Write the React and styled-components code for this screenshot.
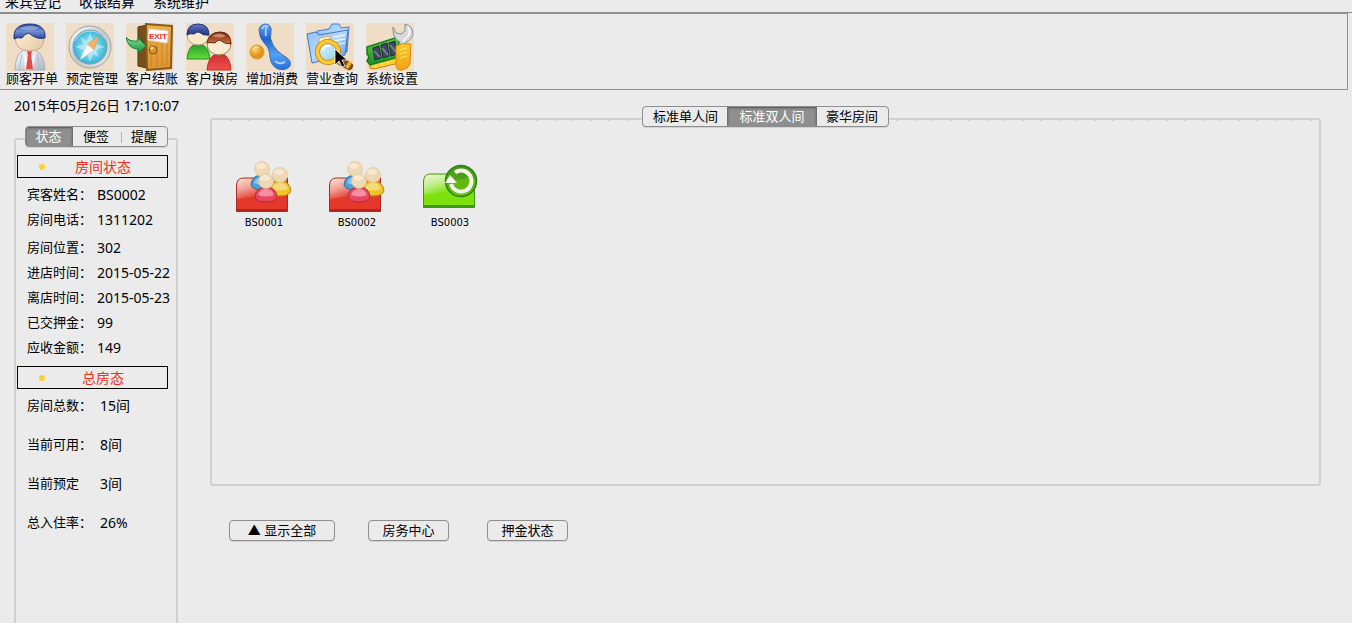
import React, { useState } from "react";
import styled, { createGlobalStyle } from "styled-components";

const GlobalStyle = createGlobalStyle`
  * { box-sizing: border-box; }
  body {
    margin: 0;
    background: #ebebeb;
    color: #000;
    font-family: "Noto Sans", "Noto Sans CJK SC", sans-serif;
    font-size: 13px;
  }
  button { font: inherit; color: inherit; cursor: default; }
`;

const Page = styled.div`
  min-height: 100vh;
  display: flex;
  flex-direction: column;
  overflow: hidden;
`;

const MenuBar = styled.nav`
  height: 12px;
  flex: none;
  display: flex;
  align-items: flex-end;
  gap: 18px;
  padding-left: 5px;
  overflow: hidden;
`;

const MenuItem = styled.button`
  border: 0;
  padding: 0;
  background: none;
  font-size: 14px;
  line-height: 20px;
`;

const ToolBarRow = styled.div`
  border-top: 1px solid #8e8e8e;
  padding-right: 4px;
`;

const ToolBar = styled.div`
  display: flex;
  gap: 8px;
  height: 77px;
  padding: 9px 6px 0;
  border: 1px solid #8e8e8e;
  border-left: 0;
`;

const ToolButton = styled.button`
  width: 52px;
  display: flex;
  flex-direction: column;
  align-items: flex-start;
  border: 0;
  padding: 0;
  background: none;
  line-height: 14px;
  white-space: nowrap;
  svg { display: block; background: #efdec5; }
`;

const Body = styled.div`
  flex: 1;
  display: flex;
  gap: 32px;
  padding: 6px 31px 0 14px;
`;

const SideBar = styled.aside`
  width: 164px;
  flex: none;
  display: flex;
  flex-direction: column;
`;

const Clock = styled.time`
  font-size: 14px;
  line-height: 20px;
  white-space: nowrap;
`;

const TabList = styled.div`
  position: relative;
  z-index: 1;
  align-self: center;
  display: flex;
  height: 21px;
  margin-top: 10px;
  border: 1px solid #8e8e8e;
  border-radius: 4px;
  background: #ebebeb;
  box-shadow: 0 1px 0 #d2d2d2;
  overflow: hidden;
`;

const Tab = styled.button`
  width: ${(p) => p.$width}px;
  border: 0;
  padding: 0;
  text-align: center;
  line-height: 19px;
  white-space: nowrap;
  background: ${(p) => (p.$active ? "#8f8f8f" : "transparent")};
  color: ${(p) => (p.$active ? "#fff" : "#000")};
  box-shadow: ${(p) => (p.$active ? "inset 0 1px 2px #555, 0 0 0 1px #707070" : "none")};
`;

const TabRule = styled.span`
  width: 1px;
  height: 11px;
  margin-top: 5px;
  background: #b4b4b4;
`;

const RoomTabs = styled.div`
  display: flex;
  justify-content: center;
`;

const SideFrame = styled.section`
  flex: 1;
  margin-top: -9px;
  padding: 15px 8px 0 1px;
  border: 2px solid #d0d0d0;
  border-bottom: 0;
  border-radius: 3px 3px 0 0;
`;

const SectionTitle = styled.h2`
  display: flex;
  align-items: center;
  height: 23px;
  margin: 0;
  padding: 1px 6px 0 21px;
  border: 1px solid #000;
  color: #f03022;
  font-size: 14px;
  font-weight: 400;
  line-height: 20px;
  span { flex: 1; text-align: center; }
`;

const Dot = styled.i`
  width: 6px;
  height: 6px;
  border-radius: 50%;
  background: #fbcf2d;
`;

const Facts = styled.dl`
  margin: 0;
  padding: ${(p) => p.$top}px 0 0 10px;
`;

const Fact = styled.div`
  display: grid;
  grid-template-columns: ${(p) => (p.$tall ? 73 : 70)}px 1fr;
  height: ${(p) => (p.$tall ? 39 : 25)}px;
  line-height: 25px;
  white-space: nowrap;
  dd { margin: 0; font-size: 14px; }
`;

const SectionGap = styled.div`
  height: 6px;
`;

const Main = styled.main`
  flex: 1;
  min-width: 0;
  display: flex;
  flex-direction: column;
  padding-bottom: 82px;
`;

const RoomFrame = styled.section`
  flex: 1;
  display: flex;
  gap: 37px;
  margin-top: -9px;
  padding: 40px 24px;
  border: 2px solid #d0d0d0;
  border-radius: 3px;
  background: repeating-linear-gradient(90deg, transparent 0 16px, #d0d0d0 16px 18px) 2px 0 / 100% 1px no-repeat;
`;

const Room = styled.button`
  width: 56px;
  height: 70px;
  border: 0;
  padding: 0;
  background: none;
  font-family: "DejaVu Sans", sans-serif;
  font-size: 10px;
  line-height: 14px;
  text-align: center;
  svg { display: block; margin-bottom: 1px; }
`;

const Actions = styled.div`
  display: flex;
  gap: 38px;
  padding: 34px 19px 0;
  button:first-child { margin-right: -5px; }
`;

const ActionButton = styled.button`
  width: ${(p) => (p.$wide ? 106 : 81)}px;
  height: 21px;
  padding: 0;
  border: 1px solid #8e8e8e;
  border-radius: 4px;
  background: #ebebeb;
  box-shadow: 0 1px 0 #d2d2d2;
  line-height: 19px;
  white-space: nowrap;
`;

const Grad = ({ id, stops, x2 = 0, y2 = 1 }) => (
  <linearGradient id={id} x1="0" y1="0" x2={x2} y2={y2}>
    {stops.map((c, i) => (
      <stop key={i} offset={i / (stops.length - 1)} stopColor={c} />
    ))}
  </linearGradient>
);

const Icon = ({ children }) => (
  <svg width="48" height="48" viewBox="0 0 48 48" aria-hidden="true">{children}</svg>
);

const GuestIcon = () => (
  <Icon>
    <defs>
      <Grad id="gHair" stops={["#2948a0", "#7190d4", "#263d94"]} />
      <Grad id="gFace" stops={["#fff4df", "#e3c8a0"]} x2={1} />
      <Grad id="gCoat" stops={["#fafbff", "#aeb5c7"]} x2={1} />
    </defs>
    <path d="M9 47q0-16 9-20h11q9 4 10 20z" fill="url(#gCoat)" stroke="#aaafbd" />
    <path d="M17 28l6 11 7-11-3 18h-8z" fill="#f4f5fb" />
    <path d="M21 28h5l-1 4 2 14h-7l2-14z" fill="#e44848" />
    <path d="M9 15q0-13 15-13t14 13q0 13-14 13T9 15" fill="url(#gFace)" stroke="#c8aa80" />
    <path d="M8 16C7 5 14 1 24 1s16 5 15 14q-9 2-16-5-5 1-7 5-5-1-8 1" fill="url(#gHair)" stroke="#27377d" />
    <path d="M13 6q10-6 20-1-6 4-20 1" fill="#9eb4e2" opacity=".7" />
    <path d="M16 31l-3 15M31 31l3 15" stroke="#b4bbcc" />
  </Icon>
);

const CompassIcon = () => (
  <Icon>
    <defs>
      <radialGradient id="cDisc"><stop stopColor="#baf2fb" /><stop offset=".65" stopColor="#62cbe6" /><stop offset="1" stopColor="#35b4d8" /></radialGradient>
      <Grad id="cRim" stops={["#fff", "#c3c8cc", "#e7e7e7"]} x2={1} />
    </defs>
    <circle cx="24" cy="24" r="21" fill="url(#cRim)" stroke="#9aa1a6" />
    <circle cx="24" cy="24" r="17" fill="url(#cDisc)" stroke="#8b9aa3" />
    <path d="M24 9l3 9 6-4-3 7 9 3-9 3 3 7-6-3-3 8-3-8-7 4 4-8-9-3 9-3-4-7 7 4z" fill="#e1f8fc" opacity=".5" />
    <path d="M33 13l-5 14-7-6z" fill="#f0b56b" stroke="#d29148" strokeWidth=".5" />
    <path d="M21 21l7 6-14 10z" fill="#fff" stroke="#a4bbc2" strokeWidth=".5" />
    <path d="M9 18q5-10 15-10t15 8" stroke="#fff" fill="none" opacity=".6" />
  </Icon>
);

const ExitIcon = () => (
  <Icon>
    <defs><Grad id="dWood" stops={["#edb14c", "#dc922d"]} /><Grad id="dArrow" stops={["#84e091", "#16943c"]} /></defs>
    <path d="M12 4l9-2v43l-9-2z" fill="#76501a" stroke="#4e3410" />
    <path d="M20 1l26 2-1 42-24 2z" fill="url(#dWood)" stroke="#8a591c" strokeWidth="2" />
    <path d="M25 20v23M31 20v24M36 20v23M41 20v22" stroke="#c9822a" />
    <path d="M23 6l19 2-1 12-19-3z" fill="#fff" stroke="#ddd" />
    <text x="23" y="16" fontFamily="Liberation Sans, sans-serif" fontWeight="700" fontSize="8" fill="#f22">EXIT</text>
    <circle cx="27" cy="27" r="4" fill="#d6942c" stroke="#865711" />
    <circle cx="26" cy="25" r="1.5" fill="#ffe4a0" />
    <path d="M0 14q3 5 12 4v-3l8 8-8 7v-4Q2 26 0 14" fill="url(#dArrow)" stroke="#17813a" />
  </Icon>
);

const SwapIcon = () => (
  <Icon>
    <defs>
      <Grad id="sGreen" stops={["#269c2d", "#60dd35"]} /><Grad id="sRed" stops={["#c83131", "#f0504b"]} />
      <Grad id="sBrown" stops={["#6e250e", "#d27340"]} /><Grad id="sBlue" stops={["#6379c5", "#23307f"]} />
    </defs>
    <path d="M1 36q1-12 8-15h6q8 3 9 15z" fill="url(#sGreen)" stroke="#268b2b" />
    <ellipse cx="12" cy="12" rx="11" ry="10" fill="#f8e8cc" stroke="#bda17a" />
    <path d="M1 12Q1 1 12 1t11 11q-6 1-10-3-3 0-5 2-4-1-7 1" fill="url(#sBlue)" stroke="#283472" />
    <path d="M21 47q1-13 9-16h7q7 3 8 16z" fill="url(#sRed)" stroke="#bf2929" />
    <ellipse cx="33" cy="21" rx="12" ry="11" fill="#faead1" stroke="#9f7e56" />
    <path d="M21 20Q23 9 34 9t11 12q-7 0-11-4-3 0-5 3-4-1-8 0" fill="url(#sBrown)" stroke="#662a16" />
    <path d="M26 13q7-5 14 0-6 3-14 0" fill="#e9a781" opacity=".7" />
  </Icon>
);

const SpendIcon = () => (
  <Icon>
    <defs>
      <Grad id="pBlue" stops={["#60a2f4", "#2562c8", "#55a2f6", "#2a6bd4"]} />
      <radialGradient id="pOrb" cx=".35" cy=".3"><stop stopColor="#ffd576" /><stop offset="1" stopColor="#e49118" /></radialGradient>
    </defs>
    <path d="M13 7q1-6 7-6 6 1 5 8-2 6 2 13 4 7 11 11 8 4 6 10-4 5-12 3-7-3-8-12 0-8-5-13-6-6-6-14" fill="url(#pBlue)" stroke="#316db9" />
    <path d="M16 6q2-4 5-3-2 4-1 10M29 38q4 4 10 1" fill="none" stroke="#a3cbff" strokeWidth="2" />
    <circle cx="11" cy="29" r="7" fill="url(#pOrb)" stroke="#d69a38" />
    <path d="M7 26q3-4 6-1" fill="none" stroke="#fff0b5" />
  </Icon>
);

const SearchIcon = () => (
  <Icon>
    <defs>
      <Grad id="qFold" stops={["#8cc0fa", "#b5d8fd", "#4f8de4"]} x2={1} />
      <Grad id="qLens" stops={["#e6faff", "#88ccef"]} x2={1} />
    </defs>
    <path d="M11 8l12-2 3-5h7l2 4 8-1-2 25-24 4z" fill="url(#qFold)" stroke="#4d7fc9" />
    <path d="M1 11l9-2 3 3 29-5-3 25L6 40z" fill="url(#qFold)" stroke="#4275c4" />
    <path d="M13 15l11-2v12H13z" fill="#ffefc9" stroke="#d1a766" />
    <path d="M27 14l12-2M27 18l12-2M29 22l10-2" stroke="#fff" />
    <path d="M32 37l11 6" stroke="#824814" strokeWidth="8" strokeLinecap="round" />
    <path d="M32 36l4 3M41 41l3 2" stroke="#efb32d" strokeWidth="7" />
    <circle cx="22" cy="29" r="10.5" fill="url(#qLens)" stroke="#be8110" strokeWidth="5" />
    <circle cx="22" cy="29" r="10.5" fill="none" stroke="#ffcb2f" strokeWidth="3.4" />
    <path d="M16 27q3-5 8-4" stroke="#fff" strokeWidth="2" fill="none" />
    <path d="M29 26v16l4-4 3 6 3-1-3-6h5z" fill="#000" stroke="#fff" strokeWidth=".8" />
  </Icon>
);

const SettingsIcon = () => (
  <Icon>
    <defs><Grad id="tGreen" stops={["#63ce43", "#198e23"]} /><Grad id="tGold" stops={["#ffc629", "#f5a316"]} /></defs>
    <path d="M4 40l29-7v7L8 46l-4-1z" fill="#ffcd2d" stroke="#c77f0e" />
    <path d="M1 24l28-9 4 3v16L4 42l-3-4 2-4-2-3z" fill="url(#tGreen)" stroke="#167b20" strokeWidth="1.5" />
    <path d="M7 25l6-2 2 12-6 2zM15 22l6-2 2 13-6 2zM23 20l6-2 2 13-6 2z" fill="#42446a" stroke="#202a31" />
    <path d="M8 28l6 6M16 25l6 7M24 22l6 7" stroke="#747798" strokeWidth="2" />
    <path d="M27 4l3 6 5 1 4-3V1q8 2 8 10-1 6-7 8l-1 6-6-1 1-5q-8-4-7-15z" fill="#d7dadd" stroke="#888e94" />
    <path d="M42 4q3 5 0 9l-5 5" fill="none" stroke="#fff" strokeWidth="1.5" />
    <path d="M30 23q7-4 15-2l-1 20q-2 5-8 6t-6-5z" fill="url(#tGold)" stroke="#d58b11" />
    <path d="M34 27l7-2M34 31l7-2M34 35l7-2M10 42v3M16 40v3M22 39v3" stroke="#fff07a" />
  </Icon>
);

const Person = ({ x, y, fill, dark }) => (
  <g>
    <path
      d={`M${x - 11} ${y + 16}q1-10 11-10t11 10q-2 5-11 5t-11-5`}
      fill={fill}
      stroke={dark}
    />
    <path d={`M${x - 8} ${y + 14}q2-6 8-6t8 6q-8 3-16 0`} fill="#fff" opacity=".4" />
    <circle cx={x} cy={y} r="7.5" fill="#efd8b4" stroke="#dcc49d" strokeWidth=".7" />
    <ellipse cx={x - 1} cy={y - 3} rx="5" ry="3" fill="#fff3df" opacity=".6" />
  </g>
);

const OccupiedIcon = ({ id }) => (
  <svg width="56" height="54" viewBox="0 0 56 54" aria-hidden="true">
    <defs>
      <Grad id={id} stops={["#f8e4da", "#f0a297", "#e5382b"]} x2={0.3} y2={0.62} />
    </defs>
    <path d="M.5 25q0-8 7-8h44v33.500H.5z" fill={`url(#${id})`} stroke="#a82a21" />
    <path d="M1 38q26-5 50-2v14H1z" fill="#e5382b" />
    <path d="M1 49h50" stroke="#b4251c" strokeWidth="2" />
    <Person x={26} y={8} fill="#4c9fd8" dark="#286c9f" />
    <Person x={44} y={14} fill="#f0c326" dark="#b98612" />
    <Person x={30} y={20} fill="#ea4662" dark="#a62c3d" />
  </svg>
);

const FreeIcon = () => (
  <svg width="56" height="54" viewBox="0 0 56 54" aria-hidden="true">
    <defs>
      <Grad id="rFree" stops={["#f6f3e0", "#c3f08f", "#7ee00c"]} x2={0.3} y2={0.62} />
      <Grad id="rRing" stops={["#3f9416", "#6cc417"]} />
    </defs>
    <path d="M1.500 21q0-8 7-8h44v33.500h-51z" fill="url(#rFree)" stroke="#43960b" />
    <path d="M2 34q26-5 50-2v14H2z" fill="#7ee00c" />
    <path d="M2 45h50" stroke="#3d9b06" strokeWidth="2" />
    <circle cx="39" cy="20" r="15.500" fill="url(#rRing)" stroke="#2b8312" strokeWidth="1.500" />
    <circle cx="39" cy="20" r="9" fill="#63b80d" />
    <path d="M33 12q8-4 13 4-6 4-14 2z" fill="#4f9c18" />
    <path d="M33 11.500A10.500 10.500 0 1 1 29 23" fill="none" stroke="#f3f3e8" strokeWidth="4" />
    <path d="M28 14l7 8H23z" fill="#f8f8f0" />
  </svg>
);

const tools = [
  ["顾客开单", GuestIcon],
  ["预定管理", CompassIcon],
  ["客户结账", ExitIcon],
  ["客户换房", SwapIcon],
  ["增加消费", SpendIcon],
  ["营业查询", SearchIcon],
  ["系统设置", SettingsIcon],
];

const sideTabs = [["状态", 46], ["便签", 49], ["提醒", 45]];
const roomTabs = [["标准单人间", 85], ["标准双人间", 88], ["豪华房间", 72]];

const guestFacts = [["宾客姓名：", "BS0002"], ["房间电话：", "1311202"]];
const stayFacts = [
  ["房间位置：", "302"],
  ["进店时间：", "2015-05-22"],
  ["离店时间：", "2015-05-23"],
  ["已交押金：", "99"],
  ["应收金额：", "149"],
];
const totals = [["房间总数：", "15间"], ["当前可用：", "8间"], ["当前预定", "3间"], ["总入住率：", "26%"]];

const FactList = ({ rows, top, tall }) => (
  <Facts $top={top}>
    {rows.map(([k, v]) => (
      <Fact key={k} $tall={tall}><dt>{k}</dt><dd>{v}</dd></Fact>
    ))}
  </Facts>
);

const Title = ({ children }) => (
  <SectionTitle><Dot /><span>{children}</span></SectionTitle>
);

const Tabs = ({ items, initial, label }) => {
  const [active, setActive] = useState(initial);
  return (
    <TabList role="tablist" aria-label={label}>
      {items.map(([name, width], i) => (
        <React.Fragment key={name}>
          {i > 0 && i !== active && i - 1 !== active && <TabRule />}
          <Tab
            role="tab"
            aria-selected={i === active}
            $active={i === active}
            $width={width}
            onClick={() => setActive(i)}
          >
            {name}
          </Tab>
        </React.Fragment>
      ))}
    </TabList>
  );
};

export default function App() {
  return (
    <Page>
      <GlobalStyle />
      <MenuBar>
        {["来宾登记", "收银结算", "系统维护"].map((m) => <MenuItem key={m}>{m}</MenuItem>)}
      </MenuBar>
      <ToolBarRow>
        <ToolBar role="toolbar">
          {tools.map(([name, Glyph]) => (
            <ToolButton key={name}><Glyph />{name}</ToolButton>
          ))}
        </ToolBar>
      </ToolBarRow>
      <Body>
        <SideBar>
          <Clock>2015年05月26日 17:10:07</Clock>
          <Tabs items={sideTabs} initial={0} label="状态" />
          <SideFrame>
            <Title>房间状态</Title>
            <FactList rows={guestFacts} top={4} />
            <FactList rows={stayFacts} top={3} />
            <SectionGap />
            <Title>总房态</Title>
            <FactList rows={totals} top={4} tall />
          </SideFrame>
        </SideBar>
        <Main>
          <RoomTabs>
            <Tabs items={roomTabs} initial={1} label="房型" />
          </RoomTabs>
          <RoomFrame>
            <Room><OccupiedIcon id="rOne" />BS0001</Room>
            <Room><OccupiedIcon id="rTwo" />BS0002</Room>
            <Room><FreeIcon />BS0003</Room>
          </RoomFrame>
          <Actions>
            <ActionButton $wide>▲ 显示全部</ActionButton>
            <ActionButton>房务中心</ActionButton>
            <ActionButton>押金状态</ActionButton>
          </Actions>
        </Main>
      </Body>
    </Page>
  );
}
